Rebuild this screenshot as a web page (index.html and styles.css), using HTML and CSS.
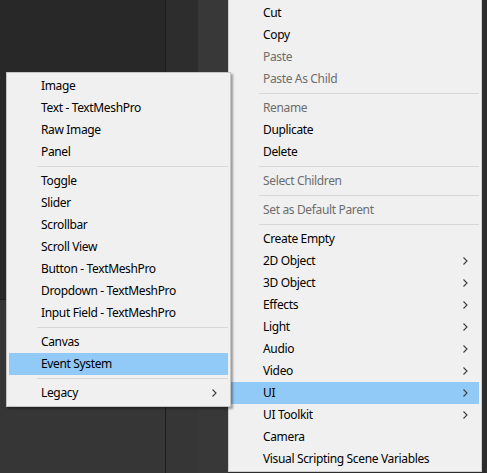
FILE: index.html
```html
<!DOCTYPE html>
<html>
<head>
<meta charset="utf-8">
<link rel="stylesheet" href="styles.css">
</head>
<body>
<div class="editor">
  <div class="col col-a">
    <div class="pane-top"></div>
    <div class="pane-bottom"></div>
  </div>
  <div class="col col-line"></div>
  <div class="col col-b">
    <div class="pane-top"></div>
    <div class="pane-bottom"></div>
  </div>
  <div class="col col-c"></div>
  <div class="col col-d"></div>
</div>

<div class="menu menu-main">
  <div class="item">Cut</div>
  <div class="item">Copy</div>
  <div class="item disabled">Paste</div>
  <div class="item disabled">Paste As Child</div>
  <div class="sep"></div>
  <div class="item disabled">Rename</div>
  <div class="item">Duplicate</div>
  <div class="item">Delete</div>
  <div class="sep"></div>
  <div class="item disabled">Select Children</div>
  <div class="sep"></div>
  <div class="item disabled">Set as Default Parent</div>
  <div class="sep"></div>
  <div class="item">Create Empty</div>
  <div class="item sub">2D Object<svg class="chev" width="5" height="8" viewBox="0 0 5 8"><path d="M0.5 0.5 L4 4 L0.5 7.5" fill="none" stroke="#3c3c3c" stroke-width="1.1"/></svg></div>
  <div class="item sub">3D Object<svg class="chev" width="5" height="8" viewBox="0 0 5 8"><path d="M0.5 0.5 L4 4 L0.5 7.5" fill="none" stroke="#3c3c3c" stroke-width="1.1"/></svg></div>
  <div class="item sub">Effects<svg class="chev" width="5" height="8" viewBox="0 0 5 8"><path d="M0.5 0.5 L4 4 L0.5 7.5" fill="none" stroke="#3c3c3c" stroke-width="1.1"/></svg></div>
  <div class="item sub">Light<svg class="chev" width="5" height="8" viewBox="0 0 5 8"><path d="M0.5 0.5 L4 4 L0.5 7.5" fill="none" stroke="#3c3c3c" stroke-width="1.1"/></svg></div>
  <div class="item sub">Audio<svg class="chev" width="5" height="8" viewBox="0 0 5 8"><path d="M0.5 0.5 L4 4 L0.5 7.5" fill="none" stroke="#3c3c3c" stroke-width="1.1"/></svg></div>
  <div class="item sub">Video<svg class="chev" width="5" height="8" viewBox="0 0 5 8"><path d="M0.5 0.5 L4 4 L0.5 7.5" fill="none" stroke="#3c3c3c" stroke-width="1.1"/></svg></div>
  <div class="item sub active">UI<svg class="chev" width="5" height="8" viewBox="0 0 5 8"><path d="M0.5 0.5 L4 4 L0.5 7.5" fill="none" stroke="#3c3c3c" stroke-width="1.1"/></svg></div>
  <div class="item sub">UI Toolkit<svg class="chev" width="5" height="8" viewBox="0 0 5 8"><path d="M0.5 0.5 L4 4 L0.5 7.5" fill="none" stroke="#3c3c3c" stroke-width="1.1"/></svg></div>
  <div class="item">Camera</div>
  <div class="item">Visual Scripting Scene Variables</div>
</div>

<div class="menu menu-sub">
  <div class="item">Image</div>
  <div class="item">Text - TextMeshPro</div>
  <div class="item">Raw Image</div>
  <div class="item">Panel</div>
  <div class="sep"></div>
  <div class="item">Toggle</div>
  <div class="item">Slider</div>
  <div class="item">Scrollbar</div>
  <div class="item">Scroll View</div>
  <div class="item">Button - TextMeshPro</div>
  <div class="item">Dropdown - TextMeshPro</div>
  <div class="item">Input Field - TextMeshPro</div>
  <div class="sep"></div>
  <div class="item">Canvas</div>
  <div class="item active">Event System</div>
  <div class="sep"></div>
  <div class="item sub">Legacy<svg class="chev" width="5" height="8" viewBox="0 0 5 8"><path d="M0.5 0.5 L4 4 L0.5 7.5" fill="none" stroke="#3c3c3c" stroke-width="1.1"/></svg></div>
</div>
</body>
</html>
```

FILE: styles.css
```css
html, body {
  margin: 0;
  padding: 0;
  width: 487px;
  height: 473px;
  overflow: hidden;
  background: #2c2c2c;
  font-family: "Noto Sans", "Open Sans", sans-serif;
}

.editor {
  display: flex;
  width: 487px;
  height: 473px;
}

.col {
  display: flex;
  flex-direction: column;
  height: 100%;
}

.col-a { width: 165px; }
.col-a .pane-top { height: 299px; background: #282828; border-bottom: 1px solid #1f1f1f; }
.col-a .pane-bottom { flex: 1; background: #363636; }

.col-line { width: 1px; background: #1d1d1d; }

.col-b { width: 32px; }
.col-b .pane-top { height: 299px; background: #2d2d2d; }
.col-b .pane-bottom { flex: 1; background: #363636; }

.col-c { width: 30px; background: #383838; }
.col-d { flex: 1; background: #2c2c2c; }

.menu {
  position: absolute;
  box-sizing: border-box;
  background: #f0f0f0;
  border: 1px solid #cfcfcf;
  padding: 2px;
  display: flex;
  flex-direction: column;
  font-size: 12px;
  letter-spacing: -0.35px;
  color: #000;
}

.menu-main {
  left: 228px;
  top: -1px;
  width: 254px;
  padding-bottom: 1px;
}

.menu-sub {
  left: 6px;
  top: 72px;
  width: 225px;
  border-color: #c4c4c4;
  box-shadow: 2px 2px 2px rgba(0, 0, 0, 0.35);
}

.item {
  height: 22px;
  line-height: 22px;
  padding-left: 32px;
  padding-right: 11px;
  display: flex;
  align-items: center;
  justify-content: space-between;
  white-space: nowrap;
}

.item.disabled { color: #6d6d6d; }
.item.active { background: #91c9f7; }

.chev { flex: none; }

.sep {
  height: 1px;
  margin: 3px 0 3px 28px;
  background: #d7d7d7;
}
```
